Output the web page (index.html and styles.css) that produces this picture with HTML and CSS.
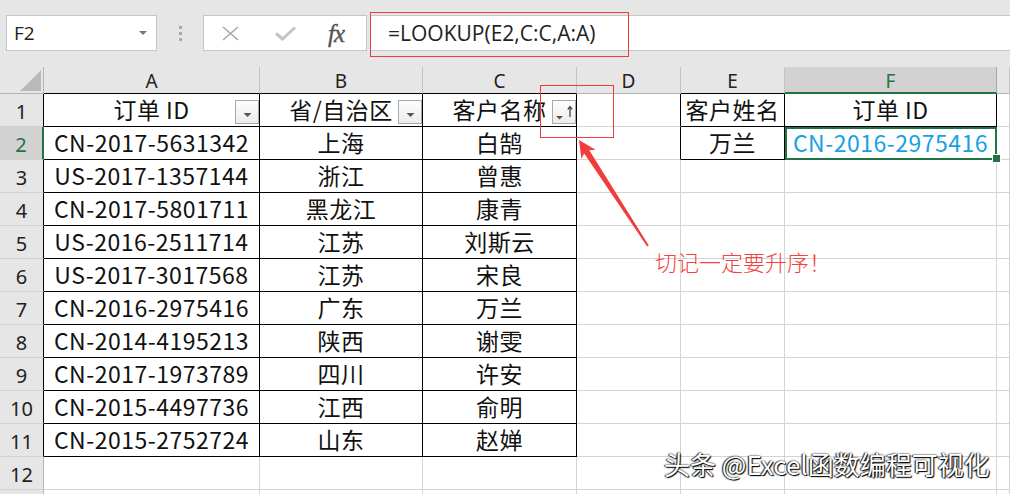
FILE: index.html
```html
<!DOCTYPE html>
<html lang="zh-CN">
<head>
<meta charset="utf-8">
<title>LOOKUP</title>
<link rel="stylesheet" href="styles.css">
</head>
<body>
<div class="app">
  <div class="toolbar">
    <div class="namebox"><span>F2</span><svg class="nb-arrow" width="8" height="4" viewBox="0 0 8 4"><polygon points="0,0 8,0 4,4" fill="#777"/></svg></div>
    <div class="grip"><i></i><i></i><i></i></div>
    <div class="fxbox">
      <svg class="ic-x" width="17" height="15" viewBox="0 0 17 15"><path d="M1 1 L16 14 M16 1 L1 14" stroke="#a9a9a9" stroke-width="1.6" fill="none"/></svg>
      <svg class="ic-ok" width="21" height="15" viewBox="0 0 21 15"><path d="M1 7.5 L7.5 13 L20 1.5" stroke="#c4c4c4" stroke-width="3" fill="none"/></svg>
      <span class="fx">fx</span>
    </div>
    <div class="formula">=LOOKUP(E2,C:C,A:A)</div>
  </div>

  <div class="sheet">
    <div class="corner"><svg class="tri" width="21" height="21" viewBox="0 0 21 21"><polygon points="21,0 21,21 0,21" fill="#b9b9b9"/></svg></div>
    <div class="ch t">A</div><div class="ch t">B</div><div class="ch t">C</div><div class="ch">D</div><div class="ch t">E</div><div class="ch sel">F</div><div class="ch"></div>

    <div class="rh t">1</div>
    <div class="c t hd">订单 ID<span class="fbtn"><svg width="22" height="22" viewBox="0 0 22 22"><polygon points="7.5,12 15.5,12 11.5,16" fill="#555"/></svg></span></div>
    <div class="c t hd">省/自治区<span class="fbtn"><svg width="22" height="22" viewBox="0 0 22 22"><polygon points="7.5,12 15.5,12 11.5,16" fill="#555"/></svg></span></div>
    <div class="c t hd">客户名称<span class="fbtn"><svg width="22" height="22" viewBox="0 0 22 22"><polygon points="3,15 10,15 6.5,18.5" fill="#555"/><path d="M17 5.5 V16 M14.8 8.3 L17 5.5 L19.2 8.3" stroke="#444" stroke-width="1.3" fill="none"/></svg></span></div>
    <div class="c lt"></div><div class="c t">客户姓名</div><div class="c t">订单 ID</div><div class="c"></div>

    <div class="rh t sel">2</div>
    <div class="c t">CN-2017-5631342</div><div class="c t">上海</div><div class="c t">白鹄</div>
    <div class="c lt"></div><div class="c t">万兰</div><div class="c active blue">CN-2016-2975416</div><div class="c"></div>

    <div class="rh t">3</div>
    <div class="c t">US-2017-1357144</div><div class="c t">浙江</div><div class="c t">曾惠</div>
    <div class="c"></div><div class="c"></div><div class="c"></div><div class="c"></div>

    <div class="rh t">4</div>
    <div class="c t">CN-2017-5801711</div><div class="c t">黑龙江</div><div class="c t">康青</div>
    <div class="c"></div><div class="c"></div><div class="c"></div><div class="c"></div>

    <div class="rh t">5</div>
    <div class="c t">US-2016-2511714</div><div class="c t">江苏</div><div class="c t">刘斯云</div>
    <div class="c"></div><div class="c"></div><div class="c"></div><div class="c"></div>

    <div class="rh t">6</div>
    <div class="c t">US-2017-3017568</div><div class="c t">江苏</div><div class="c t">宋良</div>
    <div class="c"></div><div class="c"></div><div class="c"></div><div class="c"></div>

    <div class="rh t">7</div>
    <div class="c t">CN-2016-2975416</div><div class="c t">广东</div><div class="c t">万兰</div>
    <div class="c"></div><div class="c"></div><div class="c"></div><div class="c"></div>

    <div class="rh t">8</div>
    <div class="c t">CN-2014-4195213</div><div class="c t">陕西</div><div class="c t">谢雯</div>
    <div class="c"></div><div class="c"></div><div class="c"></div><div class="c"></div>

    <div class="rh t">9</div>
    <div class="c t">CN-2017-1973789</div><div class="c t">四川</div><div class="c t">许安</div>
    <div class="c"></div><div class="c"></div><div class="c"></div><div class="c"></div>

    <div class="rh t">10</div>
    <div class="c t">CN-2015-4497736</div><div class="c t">江西</div><div class="c t">俞明</div>
    <div class="c"></div><div class="c"></div><div class="c"></div><div class="c"></div>

    <div class="rh t">11</div>
    <div class="c t">CN-2015-2752724</div><div class="c t">山东</div><div class="c t">赵婵</div>
    <div class="c"></div><div class="c"></div><div class="c"></div><div class="c"></div>

    <div class="rh">12</div>
    <div class="c"></div><div class="c"></div><div class="c"></div>
    <div class="c"></div><div class="c"></div><div class="c"></div><div class="c"></div>

    <div class="rh end"></div>
    <div class="c end"></div><div class="c end"></div><div class="c end"></div>
    <div class="c end"></div><div class="c end"></div><div class="c end"></div><div class="c end"></div>
  </div>

  <div class="mark mark-formula"></div>
  <div class="mark mark-sort"></div>
  <svg class="arrow" width="1010" height="494" viewBox="0 0 1010 494"><polygon points="579,140 595.5,149.8 589.3,150.3 648.8,245.6 647.2,246.6 584.2,153.6 581.4,158.8" fill="#f23c3c"/></svg>
  <div class="note">切记一定要升序！</div>
  <div class="watermark">头条 @Excel函数编程可视化</div>
</div>
</body>
</html>
```

FILE: styles.css
```css
* { box-sizing: border-box; margin: 0; padding: 0; }
html, body { width: 1010px; height: 494px; overflow: hidden; }
body {
  background: #e6e6e6;
  font-family: "Noto Sans CJK SC", "Noto Sans", sans-serif;
  color: #111;
}
.app { position: relative; width: 1010px; height: 494px; overflow: hidden; }

/* ---------- formula bar ---------- */
.toolbar {
  height: 67px;
  display: flex;
  align-items: flex-start;
  padding: 15px 0 0 6px;
}
.namebox {
  width: 151px;
  height: 36px;
  background: #fff;
  border: 1px solid #c6c6c6;
  display: flex;
  align-items: center;
  justify-content: space-between;
  padding: 0 9px 0 7px;
  font-family: "Open Sans", "Noto Sans", sans-serif;
  font-size: 19px;
  color: #222;
}
.grip {
  width: 46px;
  height: 36px;
  display: flex;
  flex-direction: column;
  align-items: center;
  justify-content: center;
  gap: 3px;
}
.grip i { display: block; width: 3px; height: 3px; background: #a9a9a9; }
.fxbox {
  width: 164px;
  height: 36px;
  background: #fff;
  border: 1px solid #c6c6c6;
  display: flex;
  align-items: center;
}
.ic-x { margin-left: 18px; }
.ic-ok { margin-left: 36px; margin-top: 1px; }
.fx {
  margin-left: 32px;
  font-family: "Liberation Serif", "DejaVu Serif", serif;
  font-style: italic;
  font-size: 25px;
  color: #555;
  line-height: 1;
  letter-spacing: -1px;
  -webkit-text-stroke: 0.4px #555;
}
.formula {
  flex: 1;
  margin-left: 3px;
  margin-right: -4px;
  height: 36px;
  background: #fff;
  border: 1px solid #c6c6c6;
  padding-left: 17px;
  font-family: "Open Sans", "Noto Sans", sans-serif;
  font-size: 21px;
  line-height: 34px;
  color: #222;
}

/* ---------- sheet grid ---------- */
.sheet {
  display: grid;
  grid-template-columns: 44px 216px 163px 154px 104px 104px 212px 13px;
  grid-template-rows: 27px repeat(12, 33px) 4px;
  background: #fff;
}
.sheet > div {
  border-right: 1px solid #d4d4d4;
  border-bottom: 1px solid #d4d4d4;
  text-align: center;
  white-space: nowrap;
}
.sheet > .corner {
  background: #e6e6e6;
  border-right-color: #b5b5b5;
  border-bottom-color: #b5b5b5;
  display: flex;
  align-items: flex-end;
  justify-content: flex-end;
  padding: 0 2px 2px 0;
}
.sheet > .ch {
  background: #e6e6e6;
  font-family: "Noto Sans", "Open Sans", sans-serif;
  font-size: 19px;
  line-height: 26px;
  padding-top: 1px;
  color: #222;
  border-right-color: #c3c3c3;
  border-bottom-color: #b5b5b5;
}
.sheet > .ch.t { border-bottom-color: #000; }
.sheet > .ch.sel {
  background: #d2d2d2;
  color: #217346;
  border-bottom: 2px solid #217346;
  border-right-color: #a8a8a8;
}
.sheet > .rh {
  background: #e6e6e6;
  font-family: "Noto Sans", "Open Sans", sans-serif;
  font-size: 20px;
  line-height: 32px;
  padding-top: 2px;
  color: #222;
  border-right-color: #b5b5b5;
  border-bottom-color: #d0d0d0;
}
.sheet > .rh.t { border-right-color: #000; }
.sheet > .rh.sel {
  background: #d2d2d2;
  color: #217346;
  border-right: 2px solid #217346;
}
.sheet > .c {
  font-size: 23px;
  line-height: 31px;
  letter-spacing: 0.5px;
}
.sheet > .c.t { border-right-color: #000; border-bottom-color: #000; }
.sheet > .c.lt { border-right-color: #000; }
.sheet > .end { border-bottom: none; }
.sheet > .c.blue { color: #17a0e6; }

.hd { position: relative; }
.fbtn {
  position: absolute;
  right: 0;
  bottom: 2px;
  width: 24px;
  height: 24px;
  border: 1px solid #a9a9a9;
  background: linear-gradient(#fdfdfd, #ececec);
  display: block;
  line-height: 0;
}

.active { position: relative; z-index: 2; }
.active::before {
  content: "";
  position: absolute;
  left: 0;
  top: 0;
  right: -1px;
  bottom: -1px;
  border: 2px solid #217346;
}
.active::after {
  content: "";
  position: absolute;
  right: -5px;
  bottom: -4px;
  width: 7px;
  height: 7px;
  background: #217346;
  border: 1px solid #fff;
}

/* ---------- annotations ---------- */
.mark {
  position: absolute;
  border: 1px solid #ee3b3b;
}
.mark-formula { left: 370px; top: 12px; width: 259px; height: 45px; }
.mark-sort { left: 540px; top: 85px; width: 74px; height: 53px; }
.arrow { position: absolute; left: 0; top: 0; pointer-events: none; }
.note {
  position: absolute;
  left: 655px;
  top: 245px;
  font-size: 22px;
  font-weight: 300;
  line-height: 32px;
  color: #f5423f;
}
.watermark {
  position: absolute;
  left: 664px;
  top: 446px;
  font-size: 26px;
  line-height: 36px;
  color: #fff;
  text-shadow: 0 0 2px #000, 1px 1px 1px #000, -1px 0 1px #333;
}
```
